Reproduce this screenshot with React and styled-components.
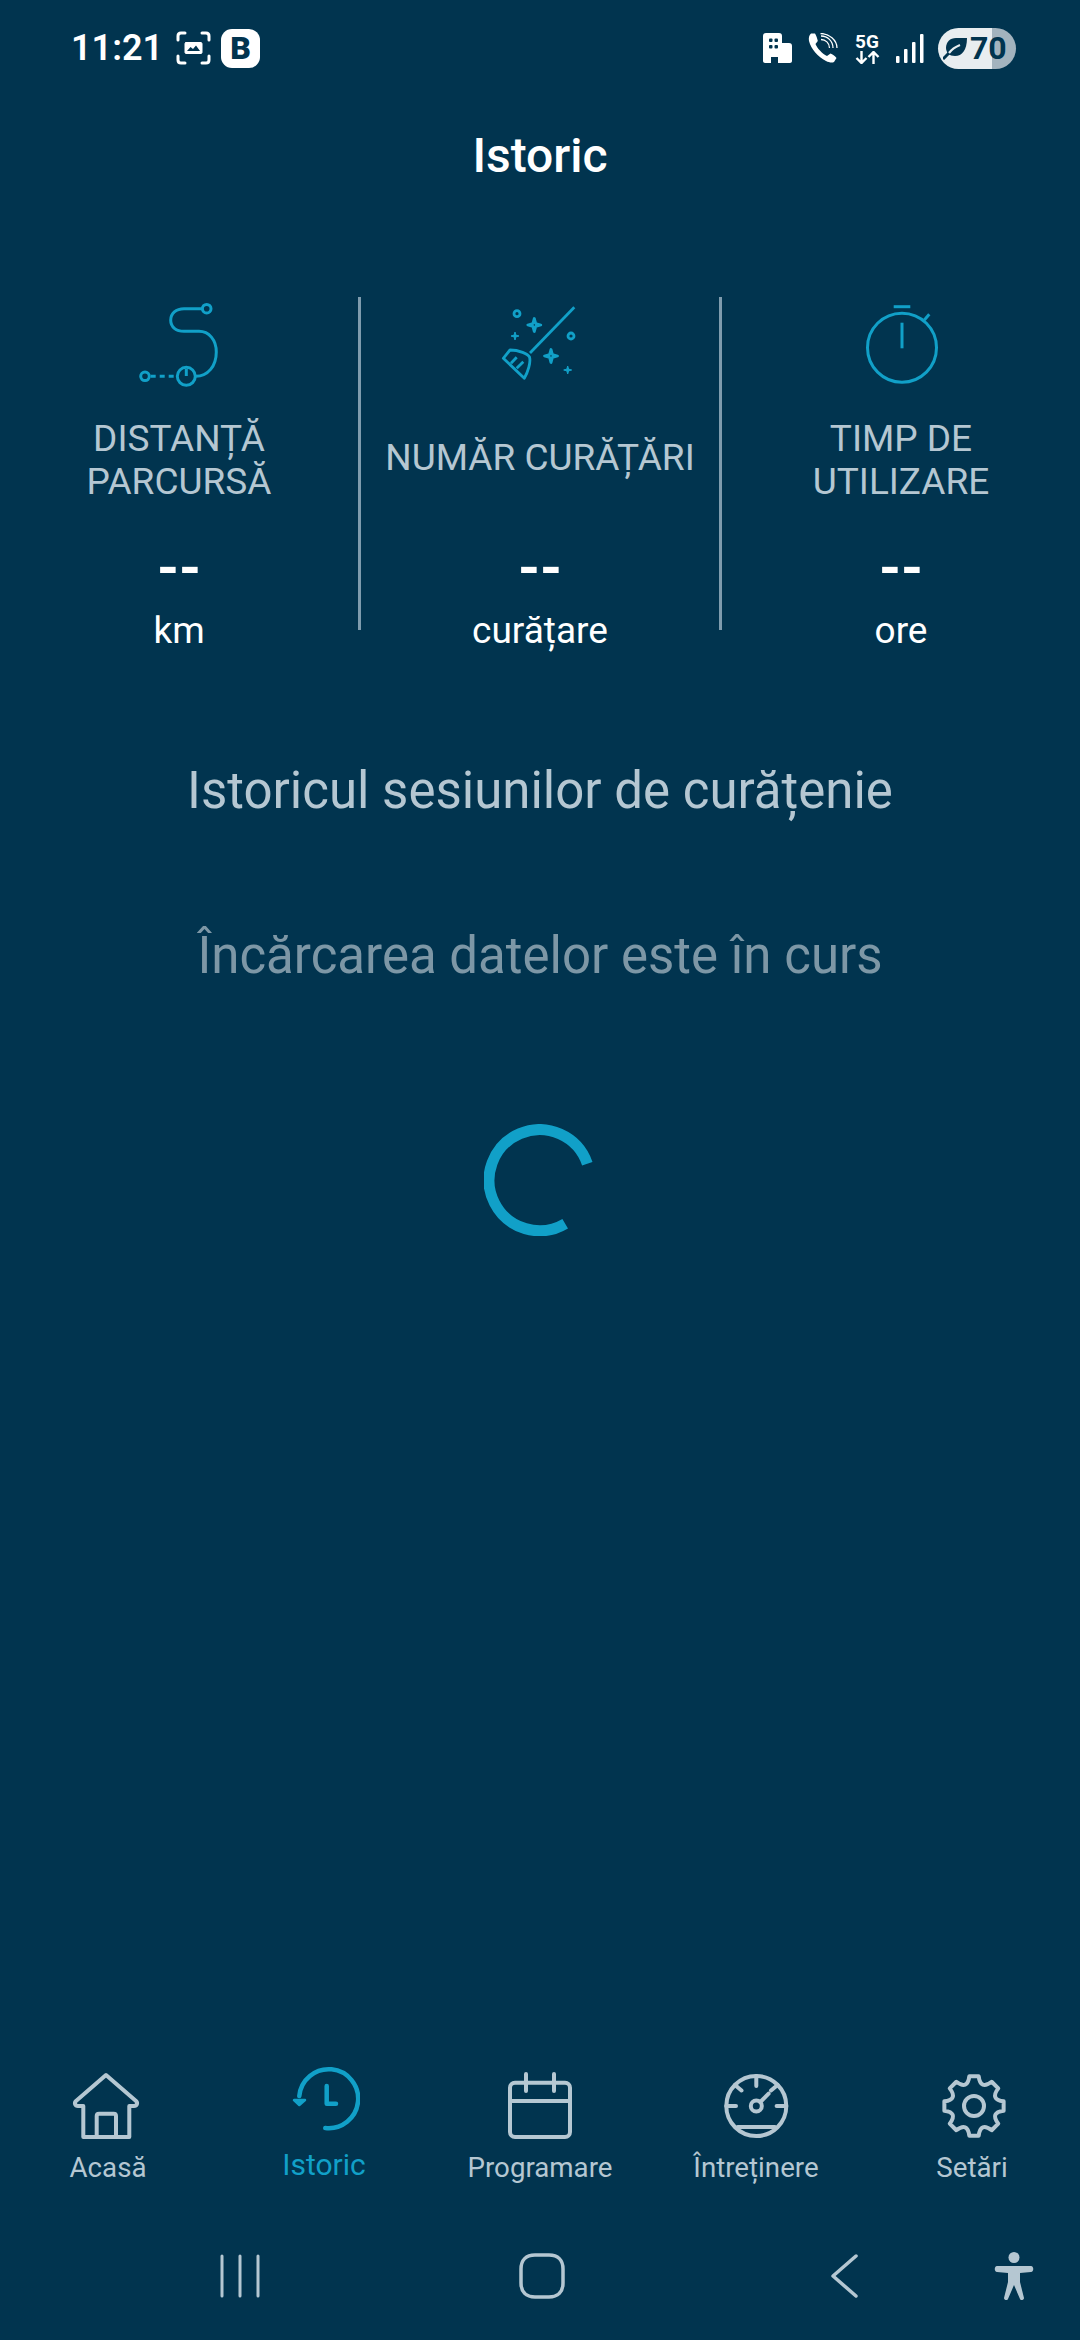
import React from "react";
import styled, { createGlobalStyle } from "styled-components";

const GlobalStyle = createGlobalStyle`
  html, body {
    margin: 0;
    padding: 0;
    background: #01344f;
  }
  * {
    box-sizing: border-box;
  }
`;

const Page = styled.div`
  display: flex;
  flex-direction: column;
  width: 1080px;
  height: 2340px;
  overflow: hidden;
  background: #01344f;
  font-family: Roboto, "Noto Sans", sans-serif;
`;

const StatusBar = styled.div`
  display: flex;
  justify-content: space-between;
  align-items: center;
  height: 96px;
  padding: 0 64px 0 71px;
  color: #fff;
`;

const StatusGroup = styled.div`
  display: flex;
  align-items: center;
  gap: ${(p) => p.$gap}px;
`;

const Clock = styled.span`
  font-size: 36px;
  font-weight: 600;
  margin-right: 3px;
`;

const BrandBadge = styled.span`
  display: flex;
  align-items: center;
  justify-content: center;
  width: 39px;
  height: 39px;
  border-radius: 11px;
  background: #fff;
  color: #01344f;
  font-size: 32px;
  font-weight: 900;
`;

const NetworkBadge = styled.span`
  display: flex;
  flex-direction: column;
  align-items: center;
  width: 26px;
  font-size: 19px;
  font-weight: 700;
  line-height: 18px;
`;

const Battery = styled.span`
  display: flex;
  align-items: center;
  width: 78px;
  height: 41px;
  margin-left: -2px;
  padding-left: 5px;
  gap: 3px;
  border-radius: 21px;
  background: linear-gradient(90deg, #e8edf0 69%, #a3b3be 69%);
  color: #01344f;
  font-size: 32px;
  font-weight: 700;
`;

const Title = styled.h1`
  display: flex;
  align-items: center;
  justify-content: center;
  height: 118px;
  margin: 0;
  color: #fff;
  font-size: 48px;
  font-weight: 500;
`;

const Stats = styled.section`
  display: grid;
  grid-template-columns: 1fr 3px 1fr 3px 1fr;
  margin-top: 83px;
`;

const Divider = styled.div`
  height: 333px;
  background: #7f9cae;
`;

const Stat = styled.div`
  display: flex;
  flex-direction: column;
  align-items: center;
  padding-top: 3px;
`;

const StatLabel = styled.div`
  display: flex;
  align-items: center;
  height: 86px;
  margin-top: 27px;
  padding-bottom: ${(p) => (p.$single ? 6 : 0)}px;
  color: #b5c7d2;
  font-size: 37px;
  line-height: 43px;
  white-space: nowrap;
  text-align: center;
`;

const StatValue = styled.div`
  height: 60px;
  margin-top: 35px;
  color: #fff;
  font-size: 56px;
  font-weight: 700;
  line-height: 60px;
`;

const StatUnit = styled.div`
  height: 40px;
  margin-top: 13px;
  color: #fff;
  font-size: 37px;
  line-height: 40px;
`;

const Heading = styled.h2`
  margin: ${(p) => p.$top}px 0 0;
  color: ${(p) => p.$color};
  font-size: 51px;
  font-weight: 400;
  line-height: 60px;
  text-align: center;
`;

const SpinnerWrap = styled.div`
  display: flex;
  justify-content: center;
  margin-top: 138px;
`;

const BottomNav = styled.nav`
  display: grid;
  grid-template-columns: repeat(5, 216px);
  margin-top: auto;
`;

const NavItem = styled.div`
  display: flex;
  flex-direction: column;
  align-items: center;
  margin-top: ${(p) => (p.$active ? -7 : 0)}px;
  color: ${(p) => (p.$active ? "#11a0c8" : "#b5c7d2")};
`;

const NavLabel = styled.span`
  height: 36px;
  margin-top: ${(p) => (p.$active ? 12 : 8)}px;
  font-size: ${(p) => (p.$active ? 30 : 27.7)}px;
  line-height: 36px;
`;

const SystemNav = styled.div`
  display: flex;
  align-items: center;
  height: 50px;
  margin: 65px 0 39px;
  padding-left: 220px;
  color: #b5c7d2;
`;

const SystemButton = styled.span`
  display: flex;
  margin-left: ${(p) => p.$left || 0}px;
`;

function RouteIcon() {
  return (
    <svg width="100" height="90" viewBox="0 0 100 90" fill="none" stroke="#11a0c8" strokeWidth="3">
      <circle cx="77.7" cy="8.7" r="4.3" />
      <path d="M73.3 8.7H55C47 8.7 41.7 13.5 41.7 20.3 41.7 27 47 31.3 55 31.3H70C80 31.3 87.3 40 87.3 52 87.3 66 79 76.3 66.7 76.3" />
      <circle cx="57.3" cy="76.3" r="9" />
      <path d="M57.3 69V76" />
      <path d="M21.7 76.3H46.7" strokeDasharray="5 4" />
      <circle cx="16" cy="76.3" r="4.3" />
    </svg>
  );
}

function Sparkle({ x, y, s }) {
  const k = s * 0.22;
  return (
    <path
      d={`M${x} ${y - s}L${x + k} ${y - k}L${x + s} ${y}L${x + k} ${y + k}L${x} ${y + s}L${x - k} ${y + k}L${x - s} ${y}L${x - k} ${y - k}Z`}
    />
  );
}

function BroomIcon() {
  return (
    <svg width="90" height="90" viewBox="0 0 90 90" fill="none" stroke="#11a0c8" strokeWidth="2.8" strokeLinejoin="round">
      <path d="M35 53L79.3 7.3" />
      <path d="M8.3 58.3L15 50C24 50 33 54 34.5 57 36 62 33 72 29.3 78.3Z" />
      <path d="M16 63.3L21.7 57.3M21.7 68.3L28.3 61.7" />
      <circle cx="22" cy="13.7" r="3" />
      <circle cx="76" cy="36" r="3" />
      <Sparkle x={39.3} y={25} s={6.5} />
      <Sparkle x={56} y={56} s={6.5} />
      <g fill="#11a0c8" strokeWidth="1">
        <Sparkle x={20} y={36} s={4} />
        <Sparkle x={72.7} y={70} s={4} />
      </g>
    </svg>
  );
}

function TimerIcon() {
  return (
    <svg width="100" height="90" viewBox="0 0 100 90" fill="none" stroke="#11a0c8" strokeWidth="3">
      <circle cx="51" cy="47.7" r="34.5" />
      <path d="M42.7 6.7H59.3" />
      <path d="M51 22.7V48.3" />
      <path d="M73.3 20L78.3 14.3" />
    </svg>
  );
}

function HomeIcon() {
  return (
    <svg width="72" height="72" viewBox="0 0 72 72" fill="none" stroke="currentColor" strokeWidth="4" strokeLinejoin="round" strokeLinecap="round">
      <path d="M11.3 36H6C3 36 2 33 4 31L34 5L64 31C66 33 65 36 62 36H57.3V67H11.3Z" />
      <path d="M24.7 67V46C24.7 44.5 25.5 43.7 27 43.7H41.7C43.2 43.7 44 44.5 44 46V67" />
    </svg>
  );
}

function HistoryIcon() {
  return (
    <svg width="72" height="72" viewBox="0 0 72 72" fill="none" stroke="currentColor" strokeWidth="4.5" strokeLinecap="round" strokeLinejoin="round">
      <path d="M11.3 33A29.5 29.5 0 1 1 37.3 65" />
      <path d="M6 37H17L11.3 42Z" fill="currentColor" strokeWidth="2.5" />
      <path d="M38.7 23V40.7H48" />
    </svg>
  );
}

function CalendarIcon() {
  return (
    <svg width="72" height="72" viewBox="0 0 72 72" fill="none" stroke="currentColor" strokeWidth="4">
      <rect x="6" y="12.7" width="60" height="54.3" rx="5" />
      <path d="M6 31H66" />
      <path d="M22 4V21M50 4V21" strokeLinecap="round" />
    </svg>
  );
}

function GaugeIcon() {
  return (
    <svg width="72" height="72" viewBox="0 0 72 72" fill="none" stroke="currentColor" strokeWidth="4" strokeLinecap="round">
      <circle cx="36.3" cy="36" r="30" />
      <path d="M36.3 6V16M6.3 36H16M56.6 36H66.3M15 15L21.5 20.5M57.6 15L51 20.5" />
      <circle cx="36.3" cy="36" r="5.5" />
      <path d="M40.3 32L48.6 23.7" />
      <path d="M17.7 57H55" />
    </svg>
  );
}

function buildGear(cx, cy, R, r) {
  const pt = (deg, rad) => {
    const a = ((deg - 90) * Math.PI) / 180;
    return `${(cx + rad * Math.cos(a)).toFixed(2)} ${(cy + rad * Math.sin(a)).toFixed(2)}`;
  };
  let d = `M${pt(-9, R)}`;
  for (let i = 0; i < 8; i++) {
    const a = i * 45;
    d += `L${pt(a + 9, R)}Q${pt(a + 22.5, r)} ${pt(a + 36, R)}`;
  }
  return d + "Z";
}

function GearIcon() {
  return (
    <svg width="72" height="72" viewBox="0 0 72 72" fill="none" stroke="currentColor" strokeWidth="4" strokeLinejoin="round">
      <path d={buildGear(38, 36, 30, 17)} />
      <circle cx="38" cy="36" r="10" />
    </svg>
  );
}

function ScreenshotIcon() {
  return (
    <svg width="35" height="34" viewBox="0 0 35 34" fill="none" stroke="#fff" strokeWidth="3" strokeLinecap="round">
      <path d="M2 9V5C2 3 3 2 5 2H9M26 2H30C32 2 33 3 33 5V9M33 25V29C33 31 32 32 30 32H26M9 32H5C3 32 2 31 2 29V25" />
      <path d="M10 11.5H25C25.5 11.5 26 12 26 13V21.5C26 22 25.5 22.5 25 22.5H10C9.5 22.5 9 22 9 21.5V13C9 12 9.5 11.5 10 11.5Z" fill="#fff" strokeWidth="1" />
      <path d="M11 20L14.5 16L17 18L20 14.5L24 20Z" fill="#01344f" stroke="none" />
    </svg>
  );
}

function BuildingIcon() {
  return (
    <svg width="29" height="30" viewBox="0 0 29 30">
      <path d="M3 0H16C18 0 19 1 19 3V10H26C28 10 29 11 29 13V28C29 29 28 30 27 30H15V24H8V30H2C1 30 0 29 0 28V3C0 1 1 0 3 0Z" fill="#fff" />
      <g fill="#01344f">
        <rect x="6" y="5.5" width="3.5" height="3.5" rx="1" />
        <rect x="11.5" y="5.5" width="3.5" height="3.5" rx="1" />
        <rect x="6" y="12" width="3.5" height="3.5" rx="1" />
        <rect x="11.5" y="12" width="3.5" height="3.5" rx="1" />
      </g>
    </svg>
  );
}

function CallIcon() {
  return (
    <svg width="30" height="30" viewBox="0 0 30 30" fill="none">
      <path d="M3 .5L7 .5C8 2 9.5 6 9.8 8L7.5 11C9 15 14 20.5 19 23L22.5 20.5C24.5 21 27 23 28.5 25L26 29C24 30 21 29.5 18 28 10 24 3 16 1 8 .5 5 1 2 3 .5Z" fill="#fff" />
      <path d="M13 6.5C17.5 6.5 21.5 10 21.5 15M13 3C19.5 3 25 8 25 15M12.5 .5C21 .5 29 7 29 15" stroke="#fff" strokeWidth="1.3" />
    </svg>
  );
}

function TransferArrows() {
  return (
    <svg width="25" height="13" viewBox="0 0 25 13" fill="none" stroke="#fff" strokeWidth="2.4">
      <path d="M6.5 0V12M1.5 7L6.5 12L11.5 7" />
      <path d="M18.5 13V1M13.5 6L18.5 1L23.5 6" />
    </svg>
  );
}

function SignalIcon() {
  return (
    <svg width="28" height="29" viewBox="0 0 28 29" fill="#fff">
      <rect x="0" y="22" width="3.5" height="7" rx="1" />
      <rect x="8" y="15" width="3.5" height="14" rx="1" />
      <rect x="16" y="8" width="3.5" height="21" rx="1" />
      <rect x="24" y="0" width="3.5" height="29" rx="1" />
    </svg>
  );
}

function LeafIcon() {
  return (
    <svg width="24" height="24" viewBox="0 0 24 24" fill="none">
      <path d="M24 2H13C7 2 3 6 3 12 3 14 4 16 5 18 7 19 9 20 12 20 19 20 24 14 24 2Z" fill="#01344f" />
      <path d="M0 23L6 17" stroke="#01344f" strokeWidth="3" />
      <path d="M6 17C9 13 12 11 17 9" stroke="#e8edf0" strokeWidth="2.2" />
    </svg>
  );
}

function Spinner() {
  return (
    <svg width="112" height="112" viewBox="0 0 112 112" fill="none">
      <path d="M103.3 39.7A50.5 50.5 0 1 0 81.2 99.7" stroke="#11a0c8" strokeWidth="11" />
    </svg>
  );
}

function RecentsIcon() {
  return (
    <svg width="40" height="44" viewBox="0 0 40 44" stroke="currentColor" strokeWidth="3" strokeLinecap="round">
      <path d="M2 2V42M20 2V42M38 2V42" />
    </svg>
  );
}

function HomeKeyIcon() {
  return (
    <svg width="46" height="46" viewBox="0 0 46 46" fill="none" stroke="currentColor" strokeWidth="3.5">
      <path d="M16 2H30C39 2 44 7 44 16V30C44 39 39 44 30 44H16C7 44 2 39 2 30V16C2 7 7 2 16 2Z" />
    </svg>
  );
}

function BackIcon() {
  return (
    <svg width="27" height="44" viewBox="0 0 27 44" fill="none" stroke="currentColor" strokeWidth="3.5" strokeLinecap="round" strokeLinejoin="round">
      <path d="M25 2L2 22L25 42" />
    </svg>
  );
}

function AccessibilityIcon() {
  return (
    <svg width="40" height="48" viewBox="0 0 40 48" fill="currentColor">
      <circle cx="20" cy="5.5" r="5.5" />
      <path d="M3 14H37C40 14 40 20 37 20L26 21V30L30 46C30 48 27 49 26 47L20 33L14 47C13 49 10 48 10 46L14 30V21L3 20C0 20 0 14 3 14Z" />
    </svg>
  );
}

const stats = [
  { label: <>DISTANȚĂ<br />PARCURSĂ</>, unit: "km", Icon: RouteIcon },
  { label: "NUMĂR CURĂȚĂRI", unit: "curățare", Icon: BroomIcon, single: true },
  { label: <>TIMP DE<br />UTILIZARE</>, unit: "ore", Icon: TimerIcon },
];

const navItems = [
  { label: "Acasă", Icon: HomeIcon },
  { label: "Istoric", Icon: HistoryIcon, active: true },
  { label: "Programare", Icon: CalendarIcon },
  { label: "Întreținere", Icon: GaugeIcon },
  { label: "Setări", Icon: GearIcon },
];

export default function App() {
  return (
    <Page>
      <GlobalStyle />
      <StatusBar>
        <StatusGroup $gap={10}>
          <Clock>11:21</Clock>
          <ScreenshotIcon />
          <BrandBadge>B</BrandBadge>
        </StatusGroup>
        <StatusGroup $gap={16}>
          <BuildingIcon />
          <CallIcon />
          <NetworkBadge>
            5G
            <TransferArrows />
          </NetworkBadge>
          <SignalIcon />
          <Battery>
            <LeafIcon />
            70
          </Battery>
        </StatusGroup>
      </StatusBar>

      <Title>Istoric</Title>

      <Stats>
        {stats.map(({ label, unit, Icon, single }, i) => (
          <React.Fragment key={unit}>
            {i > 0 && <Divider />}
            <Stat>
              <Icon />
              <StatLabel $single={single}>
                <span>{label}</span>
              </StatLabel>
              <StatValue>--</StatValue>
              <StatUnit>{unit}</StatUnit>
            </Stat>
          </React.Fragment>
        ))}
      </Stats>

      <Heading $top={110} $color="#b5c7d2">Istoricul sesiunilor de curățenie</Heading>
      <Heading $top={105} $color="#7d97a6">Încărcarea datelor este în curs</Heading>

      <SpinnerWrap>
        <Spinner />
      </SpinnerWrap>

      <BottomNav>
        {navItems.map(({ label, Icon, active }) => (
          <NavItem key={label} $active={active}>
            <Icon />
            <NavLabel $active={active}>{label}</NavLabel>
          </NavItem>
        ))}
      </BottomNav>

      <SystemNav>
        <SystemButton><RecentsIcon /></SystemButton>
        <SystemButton $left={259}><HomeKeyIcon /></SystemButton>
        <SystemButton $left={266}><BackIcon /></SystemButton>
        <SystemButton $left={136}><AccessibilityIcon /></SystemButton>
      </SystemNav>
    </Page>
  );
}
